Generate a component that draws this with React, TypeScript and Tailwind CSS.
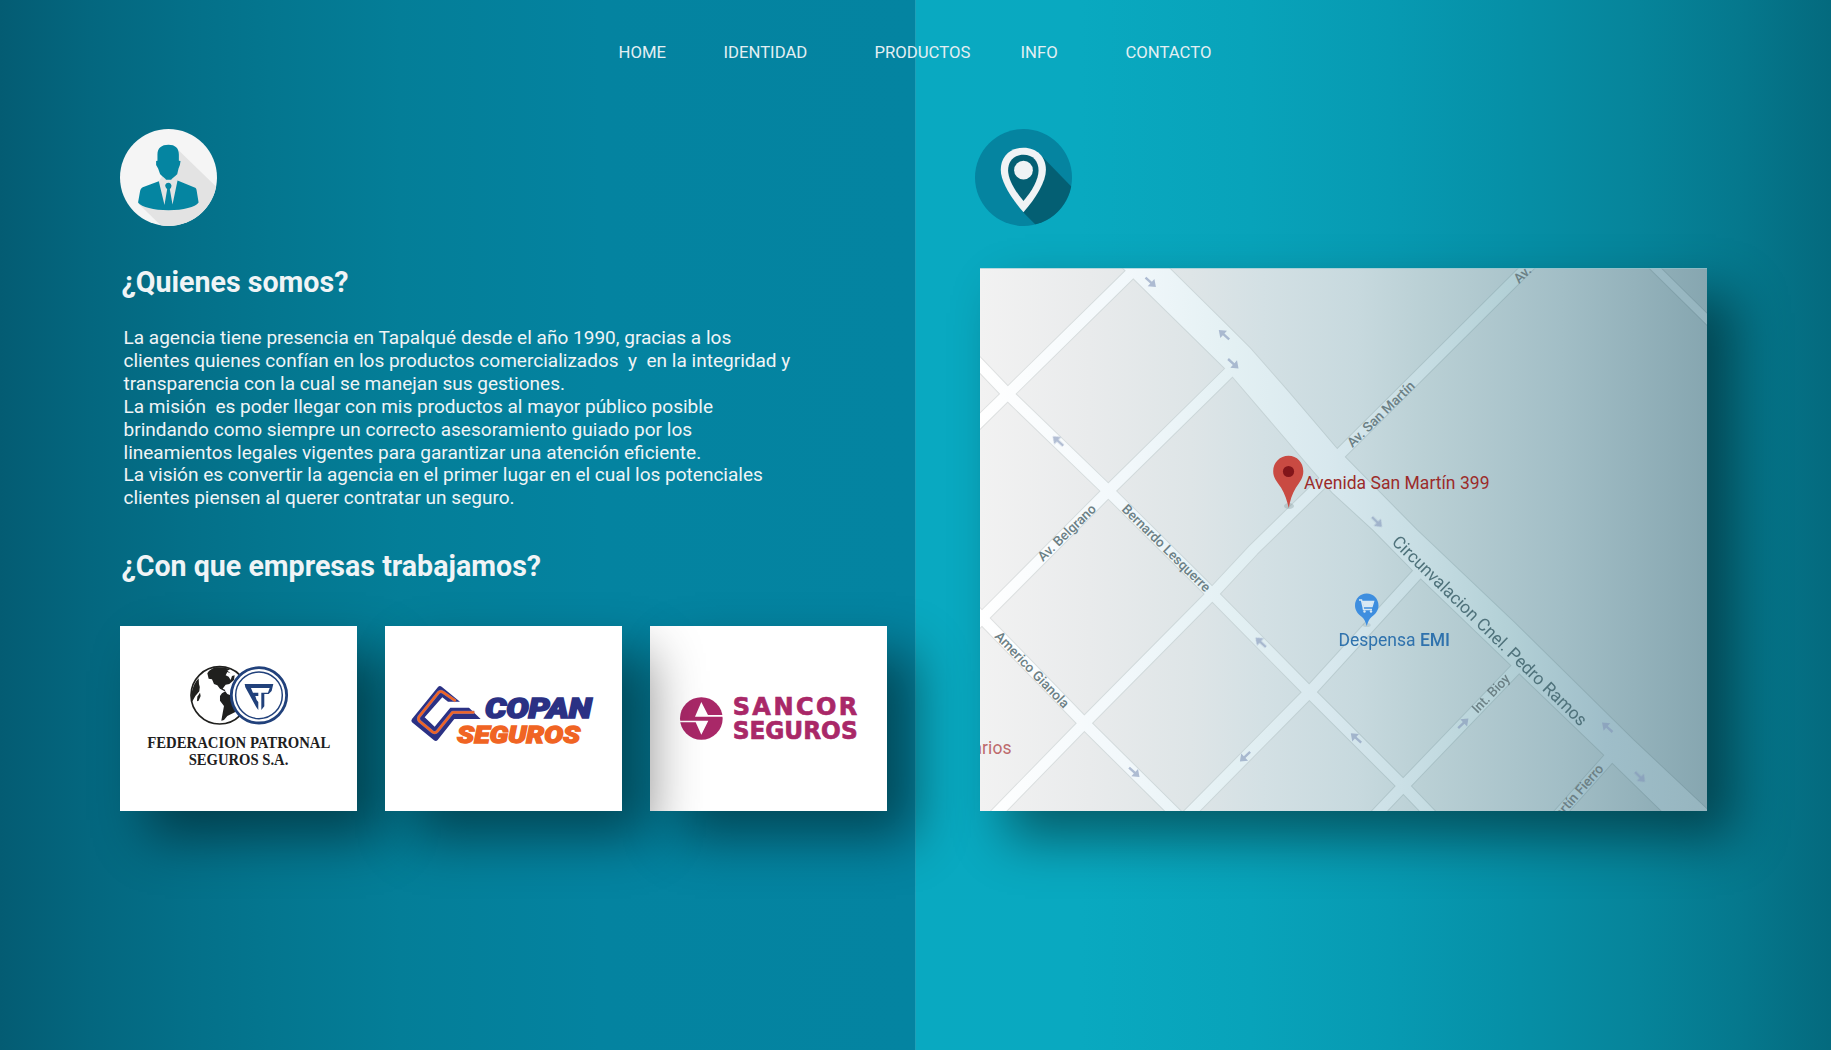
import type { ReactNode } from "react";

const nav = [
  { label: "HOME", cls: "w-[105px]" },
  { label: "IDENTIDAD", cls: "w-[151px]" },
  { label: "PRODUCTOS", cls: "w-[146px]" },
  { label: "INFO", cls: "w-[105px]" },
  { label: "CONTACTO", cls: "w-[90px]" },
];

const about = [
  "La agencia tiene presencia en Tapalqué desde el año 1990, gracias a los",
  "clientes quienes confían en los productos comercializados  y  en la integridad y",
  "transparencia con la cual se manejan sus gestiones.",
  "La misión  es poder llegar con mis productos al mayor público posible",
  "brindando como siempre un correcto asesoramiento guiado por los",
  "lineamientos legales vigentes para garantizar una atención eficiente.",
  "La visión es convertir la agencia en el primer lugar en el cual los potenciales",
  "clientes piensen al querer contratar un seguro.",
];

function PersonIcon() {
  return (
    <svg viewBox="60 58 290 290" className="block h-[97px] w-[97px]">
      <defs>
        <clipPath id="personClip"><circle cx="205" cy="203" r="145" /></clipPath>
      </defs>
      <circle cx="205" cy="203" r="145" fill="#f5f5f5" />
      <g clipPath="url(#personClip)">
        <path d="M236 122 L360 243 V360 H196 L114 280 L176 214 Z" fill="#e3e3e3" />
      </g>
      <path d="M205 105C184 105 172 115 172 134V153L168 154V166L174 176L180 193C187 200 197 206 198 210H213C214 206 224 200 231 193L235 176L239 166L241 154L236 153V134C236 115 225 105 205 105Z" fill="#0585a1" />
      <path d="M176 214L128 232C123 235 121 238 120 244L114 278C125 292 160 301 205 301C250 301 285 292 295 278L289 241C288 236 286 234 283 233L232 212L217 284L209 238Q214 234 214 228Q212 219 205 219Q196 219 195 228Q196 234 201 238L193 285Z" fill="#0585a1" />
    </svg>
  );
}

function PinIcon() {
  return (
    <svg viewBox="74 58 290 290" className="block h-[97px] w-[97px]">
      <defs>
        <clipPath id="pinClip"><circle cx="219" cy="203" r="145" /></clipPath>
      </defs>
      <circle cx="219" cy="203" r="145" fill="#0584a0" />
      <path d="M276 142L370 238V360H271L218 307Z" fill="#045f73" clipPath="url(#pinClip)" />
      <path d="M219 114C177 114 151 142 151 180C151 215 180 262 219 307C258 262 286 215 286 180C286 142 260 114 219 114Z" fill="#f0f3f5" />
      <path d="M219 135C190 135 173 155 173 182C173 208 193 243 219 273C245 243 264 208 264 182C264 155 248 135 219 135Z" fill="#045f73" />
      <circle cx="219" cy="181" r="28" fill="#f0f3f5" />
    </svg>
  );
}

function FederacionLogo() {
  return (
    <svg viewBox="30 48 712 555" className="block h-full w-full">
      <circle cx="329" cy="256" r="86" fill="#fff" stroke="#20201e" strokeWidth="5" />
      <g fill="#20201e">
        <path d="M292 190Q300 176 320 172Q345 170 360 178L352 182L362 190L352 186L347 196L356 200L362 210L366 198L374 196L372 210L358 222L347 224L338 236L346 240L344 244L330 236L322 226L312 222L306 208L296 206Z" />
        <path d="M336 250L346 244L352 252L362 256L366 274L388 286L376 306L352 318L342 330L334 332L338 310L342 288L330 272L330 258Z" />
        <path d="M266 205Q248 222 244 256L246 276Q254 258 268 244Q272 232 267 222Z" />
        <path d="M270 248L272 258L266 272L261 274L262 260Z" />
      </g>
      <circle cx="447" cy="256" r="83" fill="#fff" stroke="#21417b" strokeWidth="8.5" />
      <circle cx="447" cy="256" r="70" fill="none" stroke="#21417b" strokeWidth="4.5" />
      <path d="M404 222H490L485 243L476 252H463V289L454 300V248H474L479 234H423L429 248H445V258H436L440 270L445 276V300L439 292L406 232Z" fill="#21417b" />
      <g fill="#20201e" fontFamily="'Liberation Serif', serif" fontWeight="700" fontSize="50">
        <text x="112" y="413" textLength="549" lengthAdjust="spacingAndGlyphs">FEDERACION PATRONAL</text>
        <text x="236" y="464" textLength="299" lengthAdjust="spacingAndGlyphs">SEGUROS S.A.</text>
      </g>
    </svg>
  );
}

function CopanLogo() {
  return (
    <svg viewBox="44 48 712 555" className="block h-full w-full">
      <path d="M203 231Q208 226 214 230L269 275H233L216 262L163 322L193 350L240 293H296L331 327H252L202 390Q197 396 191 391L125 337Q121 332 125 327Z" fill="#2b3184" />
      <g fill="none" strokeLinejoin="round">
        <path d="M256 273L217 246Q210 242 204 248L146 320Q142 328 148 334L187 366Q195 371 201 364L247 307H312" stroke="#8d6f9c" strokeWidth="9.500" />
        <path d="M256 273L217 246Q210 242 204 248L146 320Q142 328 148 334L187 366Q195 371 201 364L247 307H312" stroke="#f06423" strokeWidth="7" />
      </g>
      <g fontFamily="Roboto, sans-serif" fontWeight="900" fontStyle="italic">
        <text x="344" y="324" fontSize="83" textLength="320" lengthAdjust="spacingAndGlyphs" fill="#2b3184" stroke="#2b3184" strokeWidth="5">COPAN</text>
        <text x="260" y="399" fontSize="71" textLength="370" lengthAdjust="spacingAndGlyphs" fill="#f06423" stroke="#f06423" strokeWidth="4">SEGUROS</text>
      </g>
    </svg>
  );
}

function SancorLogo() {
  return (
    <svg viewBox="58 48 712 555" className="block h-full w-full">
      <circle cx="212" cy="325.500" r="64" fill="#a92868" />
      <path d="M278 320H193L212 276L232 315H278Z" fill="#fff" />
      <path d="M145 332H233L212 374L195 337H145Z" fill="#fff" />
      <g fontFamily="'DejaVu Sans', sans-serif" fontWeight="700" fill="#a92868" stroke="#a92868" strokeWidth="2" fontSize="72">
        <text x="306" y="315" textLength="374">SANCOR</text>
        <text x="306" y="388" textLength="375" lengthAdjust="spacingAndGlyphs">SEGUROS</text>
      </g>
    </svg>
  );
}

const roads = [
  "M-10 87L0 97L27.700 126L128.300 223L232.300 326L329.300 424.300L423.300 518L457 553",
  "M-6 342L2 350L104.300 455.300L203 553",
  "M-10 163L27.700 126L150 6L160 -4",
  "M-6 358L2 350L128.300 223L248.700 104.700L262 91",
  "M9 553L104.300 455.300L232.300 326L273.300 282L343 214L358 198",
  "M202 553L329.300 424.300L436.700 306.700L448 295",
  "M390 553L423.300 518L535.700 401L548 389",
  "M573 553L628.300 491L640 479",
  "M350 196L360.700 185.300L546.700 0L556 -9",
];
const avenue =
  "M133 -10L153.300 10.300L245 100.300L252.700 108.700L334 203.700L352.700 224.700L393.300 262L440.700 310.300L531 397L539.300 405.300L632.300 494.700L692 553H740L727 541.300L653.300 472L533.300 353.700L436.700 262L365 189.300L357.300 181.300L306.700 122L270 80.300L246.700 57L179 -10Z";

const arrows: [number, number, number][] = [
  [170.7, 14.3, 42], [244, 66.7, 222], [253.3, 95.7, 42], [78, 173, 222],
  [397, 254, 45], [280.7, 374.3, 222], [154.3, 504.3, 42], [265, 488.7, 137],
  [376, 470, 222], [483.3, 455.3, -43], [627.3, 459.3, 222], [660, 509, 45],
];

const streets: { t: string; x: number; y: number; a: number; len: number; size: number }[] = [
  { t: "Av. Belgrano", x: 63, y: 294, a: -44, len: 75, size: 13.5 },
  { t: "Bernardo Lesquerre", x: 141, y: 242, a: 44.6, len: 118, size: 13.5 },
  { t: "Americo Gianola", x: 14, y: 369, a: 46, len: 100, size: 13.5 },
  { t: "Av. San Martín", x: 372.5, y: 180, a: -44, len: 88, size: 13.5 },
  { t: "Av. San Martín", x: 539, y: 16, a: -44, len: 88, size: 13.5 },
  { t: "Int. Bioy", x: 497.5, y: 446, a: -46, len: 48, size: 13.5 },
  { t: "Martín Fierro", x: 573, y: 560, a: -49, len: 78, size: 13.5 },
  { t: "Circunvalacion Cnel. Pedro Ramos", x: 411, y: 275, a: 44.2, len: 264, size: 17.5 },
];

function MapView() {
  return (
    <svg viewBox="0 0 727 543" className="block h-[543px] w-[727px]" fontFamily="Roboto, sans-serif">
      <defs>
        <linearGradient id="land" gradientUnits="userSpaceOnUse" x1="0" y1="0" x2="727" y2="0">
          <stop offset="0" stopColor="#f2f2f2" />
          <stop offset="0.150" stopColor="#e9ebec" />
          <stop offset="0.290" stopColor="#dee5e7" />
          <stop offset="0.390" stopColor="#d3e0e4" />
          <stop offset="0.520" stopColor="#c7d9de" />
          <stop offset="0.610" stopColor="#bad0d5" />
          <stop offset="0.800" stopColor="#a2bec6" />
          <stop offset="1" stopColor="#86a6b0" />
        </linearGradient>
        <linearGradient id="road" gradientUnits="userSpaceOnUse" x1="0" y1="0" x2="727" y2="0">
          <stop offset="0" stopColor="#ffffff" />
          <stop offset="0.200" stopColor="#f2f8fb" />
          <stop offset="0.350" stopColor="#e3f0f3" />
          <stop offset="0.480" stopColor="#d8e8ee" />
          <stop offset="0.600" stopColor="#c8dee4" />
          <stop offset="0.720" stopColor="#b4d1d7" />
          <stop offset="0.860" stopColor="#9fbec9" />
          <stop offset="1" stopColor="#96b5bf" />
        </linearGradient>
        <linearGradient id="edge" gradientUnits="userSpaceOnUse" x1="0" y1="0" x2="727" y2="0">
          <stop offset="0" stopColor="#dfe1e1" />
          <stop offset="0.400" stopColor="#c5d3d6" />
          <stop offset="0.700" stopColor="#9fbbc1" />
          <stop offset="1" stopColor="#7c9ca6" />
        </linearGradient>
      </defs>
      <rect width="727" height="543" fill="url(#land)" />
      <g fill="none" stroke="url(#edge)" strokeWidth="12.800">
        {roads.map((d) => <path key={d} d={d} />)}
        <path d="M665 -10L675 0L727 51.300L740 64" strokeWidth="9.800" />
      </g>
      <path d={avenue} fill="none" stroke="url(#edge)" strokeWidth="2" />
      <g fill="none" stroke="url(#road)" strokeWidth="10.800">
        {roads.map((d) => <path key={d} d={d} />)}
        <path d="M665 -10L675 0L727 51.300L740 64" strokeWidth="7.800" />
      </g>
      <path d={avenue} fill="url(#road)" />
      <g fill="#8294b8" opacity="0.600">
        {arrows.map(([x, y, a]) => (
          <path key={`${x}-${y}`} transform={`translate(${x} ${y}) rotate(${a})`} d="M-7 -1.200H0.500V-5L7 0L0.500 5V1.200H-7Z" />
        ))}
      </g>
      <g>
        {streets.map((s) => (
          <text
            key={`${s.t}${s.x}`}
            transform={`translate(${s.x} ${s.y}) rotate(${s.a})`}
            fontSize={s.size}
            textLength={s.len}
            lengthAdjust="spacingAndGlyphs"
            fill={s.size > 15 ? "#4f727b" : "#6c8085"}
            fontWeight={s.size > 15 ? 400 : 500}
          >
            {s.t}
          </text>
        ))}
      </g>
      <text x="-7.500" y="485.700" fontSize="17.500" textLength="39" fill="#bd6a6c">arios</text>
      <ellipse cx="309" cy="238" rx="5" ry="3" fill="#8fa3a5" opacity="0.400" />
      <path d="M308.500 187.800C300 187.800 293.200 194.500 293.200 203.200C293.200 210 297 213.500 301 219.500C305 226 307 233 308.800 240C310 233 312 226 316 219.500C320 213.500 323.300 210 323.300 203.200C323.300 194.500 317 187.800 308.500 187.800Z" fill="#c94a42" />
      <circle cx="308.500" cy="203.500" r="5.600" fill="#82151a" />
      <text x="324" y="221.300" fontSize="17.500" textLength="185.500" lengthAdjust="spacing" fill="#9c2b2a">Avenida San Martín 399</text>
      <ellipse cx="386.700" cy="357" rx="4" ry="2" fill="#8fa3a5" opacity="0.300" />
      <path d="M386.700 325.500C380 325.500 375 331 375 337.500C375 342 377.500 346 382 349C384.500 351 385.500 354 386.700 358C388 354 389 351 391.500 349C396 346 398.500 342 398.500 337.500C398.500 331 393.500 325.500 386.700 325.500Z" fill="#3e8edf" />
      <path d="M379 332H381.500L383 338.500H392L393.500 333.500H382M383 338.500L383.500 341.500H392" fill="none" stroke="#d9e9f4" strokeWidth="1.500" />
      <path d="M382.500 334H393L391.500 338.500H383.500Z" fill="#d9e9f4" />
      <circle cx="384.500" cy="343.500" r="1.200" fill="#d9e9f4" />
      <circle cx="391" cy="343.500" r="1.200" fill="#d9e9f4" />
      <g fontSize="17.500" fill="#2f72ad">
        <text x="358.500" y="378.200" textLength="77">Despensa</text>
        <text x="440" y="378.200" textLength="30" fontWeight="500">EMI</text>
      </g>
      <rect width="727" height="1" fill="#8fc6d0" opacity="0.600" />
    </svg>
  );
}

function Card({ children, raised }: { children: ReactNode; raised?: boolean }) {
  return (
    <div
      className={
        raised
          ? "relative z-10 h-[185px] w-[237.300px] bg-white shadow-[27px_27px_50px_rgba(0,0,0,0.450)]"
          : "h-[185px] w-[237.300px] bg-white shadow-[27px_27px_50px_rgba(0,0,0,0.450)]"
      }
    >
      {children}
    </div>
  );
}

export default function App() {
  return (
    <div className="grid h-[1050px] w-[1831px] grid-cols-[915px_916px] grid-rows-[129px_921px] overflow-hidden bg-[linear-gradient(90deg,#045c73_0px,#04677f_90px,#047089_190px,#04768f_270px,#047e98_400px,#0483a0_600px,#0484a1_915px,#1fa0b8_915px,#1fa0b8_916px,#09a9c1_916px,#09a9c0_1080px,#08a3ba_1250px,#079ab2_1390px,#068fa6_1520px,#06849a_1640px,#05788d_1740px,#046a7e_1831px)] font-['Roboto',sans-serif] text-[#f0f4f6]">
      <nav className="col-span-2 flex pl-[618.500px] pt-[41px] text-[16.700px] leading-6 text-[#e3eff3]">
        {nav.map((n) => (
          <a key={n.label} className={n.cls}>{n.label}</a>
        ))}
      </nav>

      <section className="flex flex-col pl-[120px]">
        <PersonIcon />
        <h2 className="mt-[38px] ml-[1.500px] text-[28.600px] leading-9 font-bold">¿Quienes somos?</h2>
        <div className="mt-[27px] ml-[3.500px] text-[19.050px] leading-[22.900px]">
          {about.map((line) => (
            <p key={line} className="whitespace-pre">{line}</p>
          ))}
        </div>
        <h2 className="mt-[38px] ml-[1.500px] text-[28.600px] leading-9 font-bold">¿Con que empresas trabajamos?</h2>
        <div className="mt-[42px] flex gap-[27.500px]">
          <Card><FederacionLogo /></Card>
          <Card raised><CopanLogo /></Card>
          <Card><SancorLogo /></Card>
        </div>
      </section>

      <section className="flex flex-col pl-[65px]">
        <div className="-ml-[5px]"><PinIcon /></div>
        <div className="mt-[42px] h-[543px] w-[727px] shadow-[27px_27px_50px_rgba(0,0,0,0.450)]">
          <MapView />
        </div>
      </section>
    </div>
  );
}
